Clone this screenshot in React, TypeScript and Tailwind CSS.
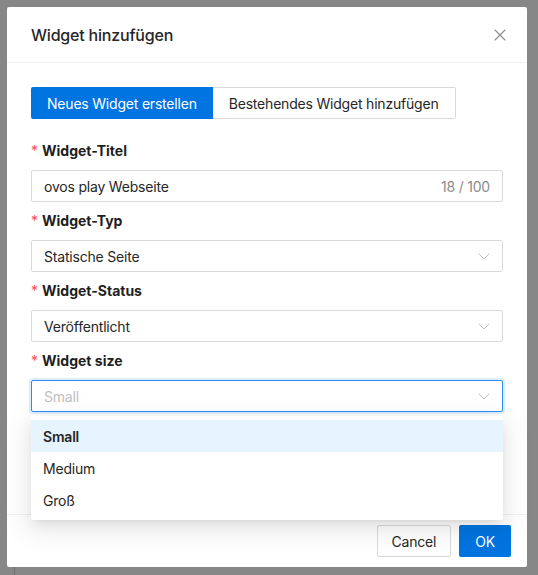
import React from 'react';

const Chevron: React.FC = () => (
  <svg width="12" height="12" viewBox="0 0 12 12" fill="none" className="text-[#bfbfbf]">
    <path d="M1 4l5 5 5-5" stroke="currentColor" strokeWidth="1" strokeLinecap="round" strokeLinejoin="round" />
  </svg>
);

const Label: React.FC<{ text: string }> = ({ text }) => (
  <div className="h-[22px] leading-[22px] mb-2 flex items-center text-[14px] font-bold text-[#1f1f1f] tracking-normal">
    <span className="text-[#ff4d4f] mr-1 text-[14px] font-normal">*</span>
    {text}
  </div>
);

const SelectBox: React.FC<{ value: string; placeholder?: boolean; focused?: boolean }> = ({ value, placeholder, focused }) => (
  <div
    className={
      focused
        ? 'h-8 px-3 flex items-center justify-between rounded-[2px] border border-[#2b8cf2] shadow-[0_0_0_2px_rgba(24,144,255,0.15)] bg-white'
        : 'h-8 px-3 flex items-center justify-between rounded-[2px] border border-[#d9d9d9] bg-white'
    }
  >
    <span className={placeholder ? 'text-[#bfbfbf]' : 'text-[#262626]'}>{value}</span>
    <Chevron />
  </div>
);

const App: React.FC = () => {
  const options = ['Small', 'Medium', 'Groß'];

  return (
    <div
      className="w-[538px] h-[575px] bg-[#878787] pt-[7px] pl-[7px] overflow-hidden text-[14px] tracking-[-0.2px]"
      style={{ fontFamily: 'Inter, "Liberation Sans", sans-serif' }}
    >
      <div className="w-[520px] h-[560px] bg-white rounded-[2px] flex flex-col">
        {/* Header */}
        <div className="h-14 shrink-0 pl-6 pr-5 flex items-center justify-between border-b border-[#f0f0f0]">
          <h1 className="text-[16px] font-medium text-[#262626]">Widget hinzufügen</h1>
          <svg width="14" height="14" viewBox="0 0 14 14" fill="none">
            <path d="M2 2l10 10M12 2L2 12" stroke="#8c8c8c" strokeWidth="1.1" strokeLinecap="round" />
          </svg>
        </div>

        {/* Body */}
        <div className="flex-1 px-6 pt-6">
          <div className="flex h-8">
            <div className="px-4 flex items-center bg-[#0074e0] text-white rounded-l-[2px]">Neues Widget erstellen</div>
            <div className="px-4 flex items-center border border-l-0 border-[#d9d9d9] text-[#262626] rounded-r-[2px]">
              Bestehendes Widget hinzufügen
            </div>
          </div>

          <div className="mt-[21px]">
            <Label text="Widget-Titel" />
            <div className="h-8 px-3 mb-2 flex items-center justify-between rounded-[2px] border border-[#d9d9d9]">
              <span className="text-[#262626]">ovos play Webseite</span>
              <span className="text-[#8c8c8c]">18 / 100</span>
            </div>

            <Label text="Widget-Typ" />
            <div className="mb-2">
              <SelectBox value="Statische Seite" />
            </div>

            <Label text="Widget-Status" />
            <div className="mb-2">
              <SelectBox value="Veröffentlicht" />
            </div>

            <Label text="Widget size" />
            <div className="relative">
              <SelectBox value="Small" placeholder focused />
              <div className="absolute left-0 right-0 top-[calc(100%+4px)] z-10 bg-white rounded-[2px] py-1 shadow-[0_6px_16px_rgba(0,0,0,0.08),0_3px_6px_-4px_rgba(0,0,0,0.12),0_9px_28px_8px_rgba(0,0,0,0.05)]">
                {options.map((opt, i) => (
                  <div
                    key={opt}
                    className={
                      i === 0
                        ? 'h-8 px-3 flex items-center bg-[#e6f4fd] font-semibold text-[#262626]'
                        : 'h-8 px-3 flex items-center text-[#262626]'
                    }
                  >
                    {opt}
                  </div>
                ))}
              </div>
            </div>
          </div>
        </div>

        {/* Footer */}
        <div className="shrink-0 border-t border-[#f0f0f0] px-4 py-[10px] flex justify-end gap-2">
          <button className="h-8 px-[14px] rounded-[2px] border border-[#d9d9d9] bg-white text-[#262626]">Cancel</button>
          <button className="h-8 px-[16px] rounded-[2px] bg-[#0074e0] text-white">OK</button>
        </div>
      </div>
      {/* page behind the overlay */}
      <div className="ml-[7px] w-px h-2 bg-[#6f6f6f]" />
    </div>
  );
};

export default App;
